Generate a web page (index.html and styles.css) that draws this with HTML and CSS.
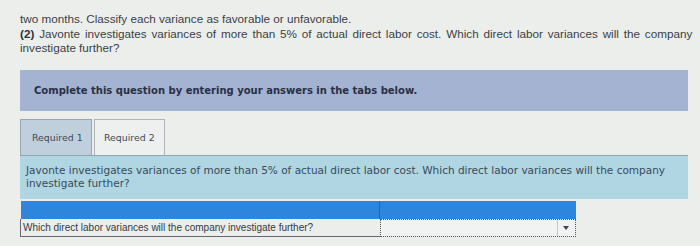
FILE: index.html
```html
<!DOCTYPE html>
<html>
<head>
<meta charset="utf-8">
<link rel="stylesheet" href="styles.css">
</head>
<body>
<div class="page">
  <div class="intro">
    <p>two months. Classify each variance as favorable or unfavorable.</p>
    <p class="q2"><span class="num">(2)</span> <span>Javonte investigates variances of more than 5% of actual direct labor cost. Which direct labor variances will the company</span></p>
    <p>investigate further?</p>
  </div>
  <div class="instr">Complete this question by entering your answers in the tabs below.</div>
  <div class="tabs">
    <div class="tab">Required 1</div>
    <div class="tab active">Required 2</div>
  </div>
  <div class="panel">Javonte investigates variances of more than 5% of actual direct labor cost. Which direct labor variances will the company investigate further?</div>
  <table class="answer">
    <tr class="head"><th class="c1"></th><th class="c2"></th></tr>
    <tr>
      <td class="c1">Which direct labor variances will the company investigate further?</td>
      <td class="c2"><div class="select"><span class="arrow"></span></div></td>
    </tr>
  </table>
</div>
</body>
</html>
```

FILE: styles.css
```css
html, body {
  margin: 0;
  padding: 0;
  background: #eceeec;
}
.page {
  padding: 12px 0 0 20px;
  width: 668px;
}
.intro {
  font-family: "Liberation Sans", Arial, sans-serif;
  font-size: 11.7px;
  line-height: 14.5px;
  color: #3a3f45;
  width: 680px;
}
.intro p {
  margin: 0;
  white-space: nowrap;
}
.intro .q2 {
  word-spacing: 1.6px;
}
.intro .num {
  font-weight: bold;
  color: #2d3238;
}
.instr {
  margin-top: 14px;
  height: 41px;
  background: #a4b3d2;
  font-family: "DejaVu Sans", Verdana, sans-serif;
  font-weight: bold;
  font-size: 10px;
  color: #2a2f45;
  display: flex;
  align-items: center;
  padding-left: 14px;
  box-sizing: border-box;
}
.tabs {
  display: flex;
  margin-top: 8px;
  gap: 2px;
}
.tab {
  height: 36px;
  box-sizing: border-box;
  border: 1px solid #98a6b4;
  border-bottom: none;
  background: #c0cfdc;
  font-family: "DejaVu Sans", Verdana, sans-serif;
  font-size: 9.4px;
  color: #3c4a5c;
  display: flex;
  align-items: center;
  white-space: nowrap;
  padding: 0 0 0 11px;
  width: 72px;
}
.tab.active {
  background: #eef0ef;
  border-color: #b0b4b6;
  width: 71px;
  padding-left: 9px;
}
.panel {
  height: 44px;
  box-sizing: border-box;
  background: #afd6e2;
  border-top: 1px solid #8fa6b3;
  font-family: "DejaVu Sans", Verdana, sans-serif;
  font-size: 10.5px;
  line-height: 13px;
  color: #3a4a5c;
  padding: 8px 8px 0 6px;
}
.answer {
  margin-top: 2px;
  border-collapse: collapse;
  width: 556px;
  font-family: "Liberation Sans", Arial, sans-serif;
}
.answer th, .answer td {
  padding: 0;
}
.answer .head th {
  height: 18px;
  background: #2e86dc;
}
.answer .head th.c1 {
  border-right: 1px solid #2467a8;
}
.answer td.c1 {
  width: 359px;
  height: 17px;
  border-left: 1px solid #667;
  border-bottom: 1px solid #667;
  font-size: 10px;
  color: #333a44;
  padding-left: 2px;
  box-sizing: border-box;
}
.answer td.c2 {
  vertical-align: top;
}
.select {
  height: 18px;
  box-sizing: border-box;
  border: 1px dotted #555;
  background: #f1f3f2;
  position: relative;
}
.arrow {
  position: absolute;
  right: 0;
  top: 0;
  width: 17px;
  height: 16px;
  border-left: 1px solid #c4c8ca;
}
.arrow::after {
  content: "";
  position: absolute;
  left: 5px;
  top: 6px;
  border-left: 3.5px solid transparent;
  border-right: 3.5px solid transparent;
  border-top: 4px solid #3c4450;
}
```
